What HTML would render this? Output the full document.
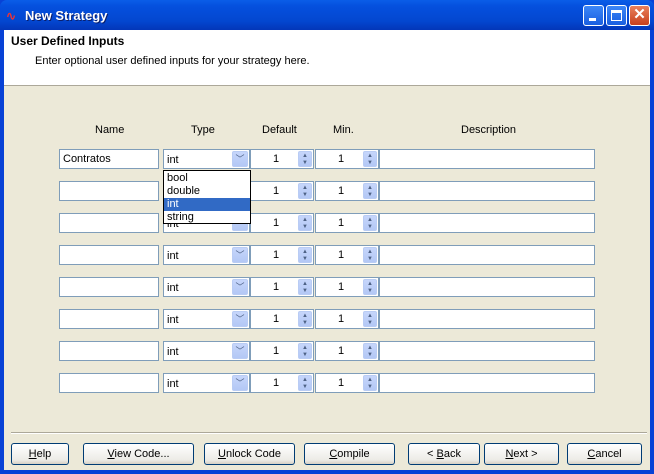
<!DOCTYPE html><html><head><style>
*{box-sizing:border-box;margin:0;padding:0}
body{width:654px;height:474px;overflow:hidden;font-family:"Liberation Sans",sans-serif;font-size:11px;position:relative;background:#0842d6}
.a{position:absolute}
.title{left:0;top:0;width:654px;height:30px;background:linear-gradient(#0a5de8,#0550de 20%,#0347d0 70%,#0336b8);border-radius:7px 7px 0 0}
.tt{left:25px;top:8px;color:#fff;font-weight:bold;font-size:13px;text-shadow:1px 1px #0a1e6a}
.wb{width:21px;height:21px;top:5px;border:1px solid #fff;border-radius:3px;background:linear-gradient(#3c86f7,#1a5fe0)}
.client{left:4px;top:30px;width:646px;height:440px;background:#ece9d8}
.hdr{left:4px;top:30px;width:646px;height:55px;background:#fff}
.in{background:#fff;border:1px solid #7f9db9;height:20px;line-height:19px;padding-left:3px;font-size:11px}
.btn{background:linear-gradient(#fff,#ecebe6 80%,#d6d0c5);border:1px solid #003c74;border-radius:3px;height:22px;top:443px;text-align:center;line-height:20px;font-size:11px}
.dd{background:linear-gradient(#c6d6fb,#b3c8f5);border:1px solid #b9ccf4;border-radius:2px;width:16px;height:16px;top:1px;right:1px;color:#4d6185;font-size:9px;text-align:center;line-height:15px}
.sp{background:linear-gradient(#c6d6fb,#b3c8f5);border:1px solid #b9ccf4;border-radius:2px;width:14px;height:16px;top:1px;right:1px;color:#4d6185;font-size:6px;text-align:center;line-height:7px;padding-top:1px}
.hd{top:124px;font-size:11px}
</style></head><body>
<div class="a title"></div>
<div class="a" style="left:6px;top:9px;color:#e33;font-size:12px;font-weight:bold">∿</div>
<div class="a tt">New Strategy</div>
<div class="a wb" style="left:583px"><div class="a" style="left:5px;top:12px;width:7px;height:3px;background:#fff"></div></div>
<div class="a wb" style="left:606px"><div class="a" style="left:4px;top:4px;width:11px;height:11px;border:1px solid #fff;border-top-width:3px"></div></div>
<div class="a wb" style="left:629px;background:linear-gradient(#e8805c,#c8401c);color:#fff;font-size:15px;text-align:center;line-height:18px;font-weight:bold">✕</div>
<div class="a client"></div>
<div class="a hdr"></div>
<div class="a" style="left:11px;top:34px;font-weight:bold;font-size:12px">User Defined Inputs</div>
<div class="a" style="left:35px;top:55px">Enter optional user defined inputs for your strategy here.</div>
<div class="a" style="left:4px;top:85px;width:646px;height:1px;background:#aca899"></div>
<div class="a hd" style="left:95px">Name</div>
<div class="a hd" style="left:191px">Type</div>
<div class="a hd" style="left:262px">Default</div>
<div class="a hd" style="left:333px">Min.</div>
<div class="a hd" style="left:461px">Description</div>

<div class="a" style="left:0;top:149px">
<div class="a in" style="left:59px;width:100px">Contratos</div>
<div class="a in" style="left:163px;width:87px;padding-top:1px">int<div class="a dd">﹀</div></div>
<div class="a in" style="left:250px;width:64px;padding-left:22px">1<div class="a sp">▲<br>▼</div></div>
<div class="a in" style="left:315px;width:64px;padding-left:22px">1<div class="a sp">▲<br>▼</div></div>
<div class="a in" style="left:379px;width:216px"></div></div>

<div class="a" style="left:0;top:181px">
<div class="a in" style="left:59px;width:100px"></div>
<div class="a in" style="left:163px;width:87px;padding-top:1px">int<div class="a dd">﹀</div></div>
<div class="a in" style="left:250px;width:64px;padding-left:22px">1<div class="a sp">▲<br>▼</div></div>
<div class="a in" style="left:315px;width:64px;padding-left:22px">1<div class="a sp">▲<br>▼</div></div>
<div class="a in" style="left:379px;width:216px"></div></div>

<div class="a" style="left:0;top:213px">
<div class="a in" style="left:59px;width:100px"></div>
<div class="a in" style="left:163px;width:87px;padding-top:1px">int<div class="a dd">﹀</div></div>
<div class="a in" style="left:250px;width:64px;padding-left:22px">1<div class="a sp">▲<br>▼</div></div>
<div class="a in" style="left:315px;width:64px;padding-left:22px">1<div class="a sp">▲<br>▼</div></div>
<div class="a in" style="left:379px;width:216px"></div></div>

<div class="a" style="left:0;top:245px">
<div class="a in" style="left:59px;width:100px"></div>
<div class="a in" style="left:163px;width:87px;padding-top:1px">int<div class="a dd">﹀</div></div>
<div class="a in" style="left:250px;width:64px;padding-left:22px">1<div class="a sp">▲<br>▼</div></div>
<div class="a in" style="left:315px;width:64px;padding-left:22px">1<div class="a sp">▲<br>▼</div></div>
<div class="a in" style="left:379px;width:216px"></div></div>

<div class="a" style="left:0;top:277px">
<div class="a in" style="left:59px;width:100px"></div>
<div class="a in" style="left:163px;width:87px;padding-top:1px">int<div class="a dd">﹀</div></div>
<div class="a in" style="left:250px;width:64px;padding-left:22px">1<div class="a sp">▲<br>▼</div></div>
<div class="a in" style="left:315px;width:64px;padding-left:22px">1<div class="a sp">▲<br>▼</div></div>
<div class="a in" style="left:379px;width:216px"></div></div>

<div class="a" style="left:0;top:309px">
<div class="a in" style="left:59px;width:100px"></div>
<div class="a in" style="left:163px;width:87px;padding-top:1px">int<div class="a dd">﹀</div></div>
<div class="a in" style="left:250px;width:64px;padding-left:22px">1<div class="a sp">▲<br>▼</div></div>
<div class="a in" style="left:315px;width:64px;padding-left:22px">1<div class="a sp">▲<br>▼</div></div>
<div class="a in" style="left:379px;width:216px"></div></div>

<div class="a" style="left:0;top:341px">
<div class="a in" style="left:59px;width:100px"></div>
<div class="a in" style="left:163px;width:87px;padding-top:1px">int<div class="a dd">﹀</div></div>
<div class="a in" style="left:250px;width:64px;padding-left:22px">1<div class="a sp">▲<br>▼</div></div>
<div class="a in" style="left:315px;width:64px;padding-left:22px">1<div class="a sp">▲<br>▼</div></div>
<div class="a in" style="left:379px;width:216px"></div></div>

<div class="a" style="left:0;top:373px">
<div class="a in" style="left:59px;width:100px"></div>
<div class="a in" style="left:163px;width:87px;padding-top:1px">int<div class="a dd">﹀</div></div>
<div class="a in" style="left:250px;width:64px;padding-left:22px">1<div class="a sp">▲<br>▼</div></div>
<div class="a in" style="left:315px;width:64px;padding-left:22px">1<div class="a sp">▲<br>▼</div></div>
<div class="a in" style="left:379px;width:216px"></div></div>

<div class="a" style="left:163px;top:170px;width:88px;height:54px;background:#fff;border:1px solid #000;line-height:13px;font-size:11px;padding-top:1px">
<div style="padding-left:3px">bool</div><div style="padding-left:3px">double</div>
<div style="padding-left:3px;background:#316ac5;color:#fff">int</div><div style="padding-left:3px">string</div></div>

<div class="a" style="left:11px;top:432px;width:636px;height:2px;border-top:1px solid #aca899;border-bottom:1px solid #fff"></div>
<div class="a btn" style="left:11px;width:58px"><u>H</u>elp</div>
<div class="a btn" style="left:83px;width:111px"><u>V</u>iew Code...</div>
<div class="a btn" style="left:204px;width:91px"><u>U</u>nlock Code</div>
<div class="a btn" style="left:304px;width:91px"><u>C</u>ompile</div>
<div class="a btn" style="left:408px;width:72px">&lt; <u>B</u>ack</div>
<div class="a btn" style="left:484px;width:75px"><u>N</u>ext &gt;</div>
<div class="a btn" style="left:567px;width:75px"><u>C</u>ancel</div>
</body></html>
